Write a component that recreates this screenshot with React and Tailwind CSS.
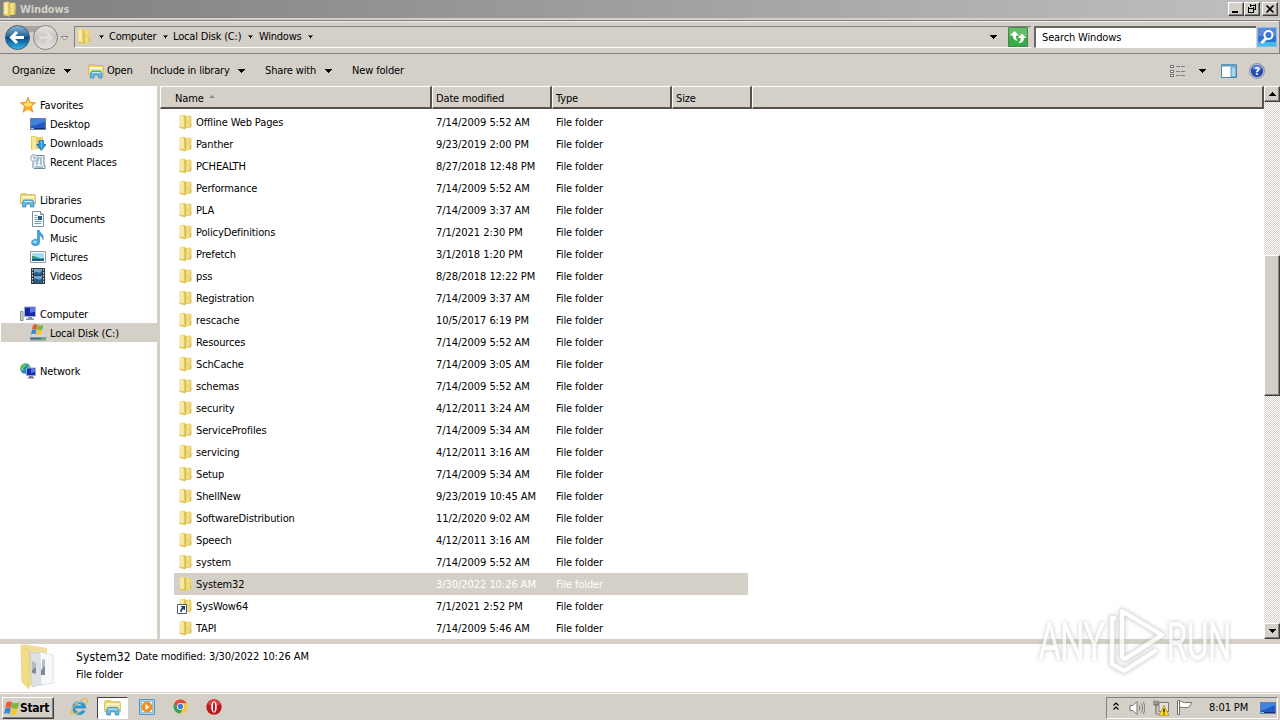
import React from 'react'

const folders = [
    ['Offline Web Pages', '7/14/2009 5:52 AM'],
    ['Panther', '9/23/2019 2:00 PM'],
    ['PCHEALTH', '8/27/2018 12:48 PM'],
    ['Performance', '7/14/2009 5:52 AM'],
    ['PLA', '7/14/2009 3:37 AM'],
    ['PolicyDefinitions', '7/1/2021 2:30 PM'],
    ['Prefetch', '3/1/2018 1:20 PM'],
    ['pss', '8/28/2018 12:22 PM'],
    ['Registration', '7/14/2009 3:37 AM'],
    ['rescache', '10/5/2017 6:19 PM'],
    ['Resources', '7/14/2009 5:52 AM'],
    ['SchCache', '7/14/2009 3:05 AM'],
    ['schemas', '7/14/2009 5:52 AM'],
    ['security', '4/12/2011 3:24 AM'],
    ['ServiceProfiles', '7/14/2009 5:34 AM'],
    ['servicing', '4/12/2011 3:16 AM'],
    ['Setup', '7/14/2009 5:34 AM'],
    ['ShellNew', '9/23/2019 10:45 AM'],
    ['SoftwareDistribution', '11/2/2020 9:02 AM'],
    ['Speech', '4/12/2011 3:16 AM'],
    ['system', '7/14/2009 5:52 AM'],
    ['System32', '3/30/2022 10:26 AM'],
    ['SysWow64', '7/1/2021 2:52 PM'],
    ['TAPI', '7/14/2009 5:46 AM'],
]

function Folder({ className = 'size-4', shortcut = false }) {
    return (
        <svg viewBox="0 0 16 16" className={`shrink-0 ${className}`}>
            <path d="M2.500 1.500L6.500.5l2.500 1v13l-1.500 1-5-1.500z" fill="#f0dd86" />
            <path d="M3.500 2H6.500v11.500h-3z" fill="#f8ebae" />
            <path d="M2.500 12.500L8 13.500v1.500L2.500 13.800z" fill="#dfc462" />
            <path d="M8.500 2l4.500-.5 1.500 1V13L13 14H8.500z" fill="#e9d272" />
            <path d="M7 1l2 1.500v12L7.500 15.300z" fill="#dcc04e" />
            <path d="M10 2.500l2-.3v4l-2 1z" fill="#f3e38f" />
            <path d="M10 8.500l2.500-1v5L10 13z" fill="#f1df86" />
            <path d="M13 9l1 .5v3l-1 .5z" fill="#c9b36a" />
            {shortcut && (
                <>
                    <path d="M.5 6.500h9v9h-9z" fill="#fff" stroke="#555b66" />
                    <path d="M3.500 8h4.500v4.500L6.700 11.300c-1.500.3-1.900 1.200-1.600 2.700l-1.600 0c-.5-2 .2-3.500 1.600-4.300z" fill="#163f86" />
                </>
            )}
        </svg>
    )
}

function Libraries({ className = 'size-4' }) {
    return (
        <svg viewBox="0 0 16 16" className={`shrink-0 ${className}`}>
            <path d="M.5 3l1-1.500h4.500l1 1h8L15.500 4v8H.5z" fill="#e9cf67" stroke="#c9ab4c" strokeWidth=".6" />
            <path d="M1.500 4h13v2h-13z" fill="#fff9d5" />
            <path d="M1 6h14v6H1z" fill="#f5e28d" />
            <path d="M2.500 15v-5L4 8h8.500l1.500 2v5h-3.500v-3H6v3z" fill="#65b9e5" stroke="#2f83ba" strokeWidth=".7" />
            <path d="M4 9.500h8.500" stroke="#c8eefc" />
        </svg>
    )
}

function Star() {
    return (
        <svg viewBox="0 0 16 16" className="size-4 shrink-0">
            <path d="M8 .3l2.200 5 5.400.5-4.200 3.500 1.600 5.900-5-3.300-5 3.300 1.600-5.900L.4 5.800l5.400-.5z" fill="#ffab24" stroke="#e08422" strokeWidth=".7" />
            <path d="M8 2.500L9.400 6.300l3.600.4L10 9l-2 1-3-1.500L3 6.700l3.500-.4z" fill="#ffe274" />
        </svg>
    )
}

function Desktop({ className = 'size-4' }) {
    return (
        <svg viewBox="0 0 16 16" className={`shrink-0 ${className}`}>
            <path d="M0 2h16v12H0z" fill="#6b7fa5" />
            <path d="M1 3h14v9H1z" fill="#2459c5" />
            <path d="M1 3h14v3C10 6 7 10 1 10z" fill="#3f82df" />
            <path d="M1 12h14v1H1z" fill="#182e69" />
            <path d="M1 12h3v1H1z" fill="#8ac9f7" />
        </svg>
    )
}

function Downloads() {
    return (
        <svg viewBox="0 0 16 16" className="size-4 shrink-0">
            <path d="M1 1h5l1 1h6v12H6l-5 1z" fill="#eacd60" />
            <path d="M2 2h4v12H2z" fill="#fae99b" />
            <path d="M9 5.500h4.500V9.500H16l-4.700 6-4.800-6H9z" fill="#2994df" stroke="#166aac" strokeWidth=".7" />
            <path d="M10 6.500h1.500v6" fill="none" stroke="#75c5f5" />
        </svg>
    )
}

function Recent() {
    return (
        <svg viewBox="0 0 16 16" className="size-4 shrink-0">
            <path d="M5 1.500h9v10h1v3H4l-1-1V8" fill="#edf4f8" stroke="#6e8797" />
            <path d="M7 4h5M7 6h2m1 0h2M6 8h2m2 0h2M6 10h2m2 0h2M5 13h8" stroke="#668fa8" />
            <circle cx="4" cy="4" r="3.400" fill="#eef7fd" stroke="#91a6b2" />
            <path d="M4 2v2.500h1.500" fill="none" stroke="#55758a" strokeWidth=".8" />
        </svg>
    )
}

function Documents() {
    return (
        <svg viewBox="0 0 16 16" className="size-4 shrink-0">
            <path d="M2.500.5h8l3 3v12h-11z" fill="#fff" stroke="#7894a6" />
            <path d="M10.500.5v3h3" fill="#cce1ed" stroke="#7894a6" />
            <path d="M4.500 4.500h3m-3 2h3m-3 2h3m-3 2h7m-7 2h7" stroke="#6c9cbc" />
            <path d="M8 5h4v4H8z" fill="#285d8a" />
        </svg>
    )
}

function Music() {
    return (
        <svg viewBox="0 0 16 16" className="size-4 shrink-0">
            <path d="M7.500 0h1.800c.2 3.500 5.200 4 3.700 9.500-.4-2.300-1.500-3.300-3.400-4v7C9.600 16.500 1.500 17 1.500 12.500 1.500 9.500 5 8.500 7.500 9.500z" fill="#3da4df" stroke="#2077b3" strokeWidth=".5" />
            <ellipse cx="5" cy="12" rx="2.200" ry="1.500" fill="#94ddfc" />
        </svg>
    )
}

function Pictures() {
    return (
        <svg viewBox="0 0 16 16" className="size-4 shrink-0">
            <path d="M.5 2.500h15v11H.5z" fill="#fff" stroke="#8a9ba5" />
            <path d="M2 4h12v8H2z" fill="#a3dcf5" />
            <path d="M2 7c3-.5 6 3 12 2v3H2z" fill="#2f9a83" />
            <path d="M2 10c5 0 8 .3 12 0v2H2z" fill="#1d5a87" />
        </svg>
    )
}

function Videos() {
    return (
        <svg viewBox="0 0 16 16" className="size-4 shrink-0">
            <path d="M1 0h14v16H1z" fill="#313941" />
            <path d="M4 1h8v6H4zm0 7h8v7H4z" fill="#6aa7d6" />
            <path d="M4 5c3-3 5 2 8-2v4H4zm0 6c3-2 5 3 8-1v5H4z" fill="#2c5b90" />
            <path d="M2.500 1v14M13.500 1v14" stroke="#dde4e8" strokeDasharray="1.500 1.500" />
        </svg>
    )
}

function Computer() {
    return (
        <svg viewBox="0 0 16 16" className="size-4 shrink-0">
            <path d="M.5 5.500h2.500v9H.5z" fill="#cad4cf" stroke="#83928f" />
            <path d="M4 .5h12v10.500H4z" fill="#a3b2ca" />
            <path d="M5 1.500h10v8.500H5z" fill="#1729a6" />
            <path d="M10 1.500h5v4L10 7z" fill="#5a78e9" />
            <path d="M8 11h4v1.500h2V14H6v-1.500h2z" fill="#8594a6" />
        </svg>
    )
}

function Flag({ className }) {
    return (
        <svg viewBox="0 0 16 16" className={`shrink-0 ${className}`}>
            <path d="M2.500 2.500c2-1.400 3.700-1.100 5.500-.2L6.900 8c-1.700-1-3.600-1-5.600.1z" fill="#ee5729" />
            <path d="M8.400 2.500c2 1 4.300.9 7-.5L14 7.900c-2 1.300-4.500 1.200-6.700.2z" fill="#76b940" />
            <path d="M1.200 8.500c2-1.200 3.800-1 5.600-.1l-1.300 5.500c-1.800-1-3.600-.9-5.400.2z" fill="#3687d9" />
            <path d="M7.200 8.600c2 1 4.500 1 6.700-.2l-1.300 5.500c-2.100 1.300-4.700 1.200-6.700.1z" fill="#fac62f" />
        </svg>
    )
}

function Disk() {
    return (
        <span className="relative size-4 shrink-0">
            <svg viewBox="0 0 16 16" className="size-4">
                <path d="M2 9h12l2 3v3.500H0V12z" fill="#7f969f" />
                <path d="M2 8.500h12l2 3.500H0z" fill="#cddadd" />
                <path d="M1 13.700h10" stroke="#3a6270" />
                <path d="M12 13h3v1.300h-3z" fill="#5ccc38" />
            </svg>
            <Flag className="absolute -top-0.5 left-px size-[13px]" />
        </span>
    )
}

function Network() {
    return (
        <svg viewBox="0 0 16 16" className="size-4 shrink-0">
            <circle cx="5.500" cy="5.500" r="5.300" fill="#2788bd" />
            <path d="M2 2c3-3 6-1 4 1L4 4 3 8C0 7 0 4 2 2zm6-1c3 2 3 5 2 7L8 5z" fill="#67c65a" />
            <path d="M6.500 5h9v7.500h-9z" fill="#1a2db0" stroke="#97a9c5" />
            <path d="M11 5.500h4v3.500l-4 1z" fill="#567be6" />
            <path d="M9 13h4v1h1v1.500H8V14h1z" fill="#6e8097" />
        </svg>
    )
}

function Arrow({ className = '' }) {
    return (
        <svg viewBox="0 0 7 4" className={`h-1 w-[7px] shrink-0 ${className}`} shapeRendering="crispEdges">
            <path d="M0 0h7L3.500 4z" fill="currentColor" />
        </svg>
    )
}

const places = [
    { label: 'Favorites', icon: <Star /> },
    { label: 'Desktop', icon: <Desktop />, child: true },
    { label: 'Downloads', icon: <Downloads />, child: true },
    { label: 'Recent Places', icon: <Recent />, child: true },
    null,
    { label: 'Libraries', icon: <Libraries /> },
    { label: 'Documents', icon: <Documents />, child: true },
    { label: 'Music', icon: <Music />, child: true },
    { label: 'Pictures', icon: <Pictures />, child: true },
    { label: 'Videos', icon: <Videos />, child: true },
    null,
    { label: 'Computer', icon: <Computer /> },
    { label: 'Local Disk (C:)', icon: <Disk />, child: true, selected: true },
    null,
    { label: 'Network', icon: <Network /> },
]

function CaptionButton({ children }) {
    return (
        <div className="h-3.5 w-4 border border-t-white border-r-[#404040] border-b-[#404040] border-l-white bg-[#d4d0c8] shadow-[inset_-1px_-1px_#808080]">
            <svg viewBox="0 0 14 12" className="h-3 w-3.5" shapeRendering="crispEdges" fill="none" stroke="#000">
                {children}
            </svg>
        </div>
    )
}

function TitleBar() {
    return (
        <div className="flex h-[18px] items-center bg-linear-to-r from-[#808080] to-[#c0c0c0] pl-px">
            <Folder />
            <span className="ml-[3px] pt-0.5 text-[11px] font-bold tracking-[-0.15px] text-[#d4d0c8]">Windows</span>
            <div className="mr-0.5 ml-auto flex">
                <CaptionButton><path d="M3 9h6" strokeWidth="2" /></CaptionButton>
                <CaptionButton><path d="M5 2h6M5.500 1v3M10.500 1v6M8 6.500h3M3 5h6M3.500 4v6M8.500 4v6M3 9.500h6" /></CaptionButton>
                <div className="w-0.5" />
                <CaptionButton><path d="M3.500 2.500l7 7m0-7l-7 7" strokeWidth="1.600" shapeRendering="auto" /></CaptionButton>
            </div>
        </div>
    )
}

function NavButtons() {
    return (
        <svg viewBox="0 0 70 32" className="h-8 w-[70px] shrink-0">
            <defs>
                <linearGradient id="back" x1="0" y1="0" x2="0" y2="1">
                    <stop offset="0" stopColor="#8bb7d5" />
                    <stop offset=".45" stopColor="#27679f" />
                    <stop offset=".5" stopColor="#0a4689" />
                    <stop offset="1" stopColor="#2ebdf0" />
                </linearGradient>
                <linearGradient id="forward" x1="0" y1="0" x2="0" y2="1">
                    <stop offset="0" stopColor="#e4e3e1" />
                    <stop offset=".5" stopColor="#c6c5c2" />
                    <stop offset="1" stopColor="#e7e6e3" />
                </linearGradient>
            </defs>
            <path d="M17 5h28v4c-8 3-20 3-28 0z" fill="#aaa69f" />
            <circle cx="17.500" cy="16.500" r="12" fill="url(#back)" stroke="#466178" />
            <path d="M17 11l-5.500 5.500L17 22M12.500 16.500H24" fill="none" stroke="#fff" strokeWidth="3" />
            <circle cx="45.500" cy="16.500" r="12" fill="url(#forward)" stroke="#858482" />
            <path d="M46 11l5.500 5.500L46 22M50.500 16.500H39" fill="none" stroke="#dddcd9" strokeWidth="3" />
            <path d="M61 15.500h7L64.500 19z" fill="#f5f4f2" stroke="#85827d" />
        </svg>
    )
}

function AddressBar() {
    return (
        <div className="mt-0.5 flex h-[34px] items-center border-t border-r border-b border-[#808080] bg-[#d4d0c8] shadow-[0_1px_#fff,inset_0_1px_#eeece8]">
            <NavButtons />
            <div className="ml-1 flex h-[22px] w-[957px] items-center border-t border-l border-[#808080] border-b border-b-white pb-px">
                <Folder className="size-[17px]" />
                <Arrow className="ml-1.5 scale-80" />
                <span className="ml-1 w-[47px]">Computer</span>
                <Arrow className="ml-1.5 scale-80" />
                <span className="ml-1 w-[69px] tracking-[-0.18px]">Local Disk (C:)</span>
                <Arrow className="ml-[5px] scale-80" />
                <span className="ml-[5px] w-[43px]">Windows</span>
                <Arrow className="ml-[5px] scale-80" />
                <Arrow className="mr-[34px] ml-auto" />
            </div>
            <div className="-ml-[23px] flex h-[22px] w-[22px] items-center">
                <svg viewBox="0 0 20 20" className="size-5">
                    <path d="M.5.5h19v19H.5z" fill="#37ac49" stroke="#4d8253" />
                    <path d="M1 1h18v8H1z" fill="#63bd6b" />
                    <path d="M6.500 4L2 8.500h2.800c0 4 2.200 5.500 5.200 5-1.800-1.200-2.200-3-2-5H11zM14 6.500L9.500 11h3c.2 2-.5 4-2.500 5 3.500.5 6-1.500 6-5h2.500z" fill="#fff" />
                </svg>
            </div>
            <div className="ml-1 flex h-[22px] w-[222px] items-center border-t-2 border-l-2 border-[#686868] border-b border-b-white bg-white pl-1.5">
                <span className="tracking-[-0.15px]">Search Windows</span>
            </div>
            <svg viewBox="0 0 20 20" className="ml-px size-5 shrink-0">
                <path d="M.5.5h19v19H.5z" fill="#2d72d2" stroke="#8eb8e8" />
                <path d="M1 1h18v8H1z" fill="#5c88dc" />
                <path d="M1 15h18v4H1z" fill="#46b8e9" />
                <path d="M9.500 11l-5 5" stroke="#fff" strokeWidth="3" />
                <circle cx="11.500" cy="8" r="4" fill="#3577d1" stroke="#fff" strokeWidth="2" />
            </svg>
        </div>
    )
}

function Toolbar() {
    return (
        <div className="flex h-8 items-center bg-[#d4d0c8] pt-px pl-3">
            <span className="w-[45px] tracking-[-0.15px]">Organize</span>
            <Arrow className="ml-[7px]" />
            <Libraries className="ml-[17px] size-4" />
            <span className="ml-[3px] w-[27px]">Open</span>
            <span className="ml-4 w-[81px] tracking-[-0.2px]">Include in library</span>
            <Arrow className="ml-[7px]" />
            <span className="ml-5 w-[53px] tracking-[-0.15px]">Share with</span>
            <Arrow className="ml-[7px]" />
            <span className="ml-5 tracking-[-0.15px]">New folder</span>
            <div className="mr-[15px] ml-auto flex items-center">
                <svg viewBox="0 0 16 14" className="h-3.5 w-4" shapeRendering="crispEdges">
                    <path d="M.5 1.500h3v2h-3zm0 4.500h3v2h-3zm0 4.500h3v2h-3z" fill="#fff" stroke="#75716d" />
                    <path d="M6 2.500h4m1 0h4M6 7h4m1 0h4m-9 4.500h4m1 0h4" stroke="#77808a" />
                </svg>
                <Arrow className="ml-[13px]" />
                <svg viewBox="0 0 16 14" className="ml-[15px] h-3.5 w-4">
                    <path d="M.5.5h15v13H.5z" fill="#fff" stroke="#4b83a4" />
                    <path d="M0 0h16v2.500H0z" fill="#5b9abd" />
                    <path d="M10 3h5v10h-5z" fill="#a2d8f1" stroke="#4b83a4" strokeWidth=".8" />
                </svg>
                <svg viewBox="0 0 16 16" className="ml-3 size-4">
                    <circle cx="8" cy="8" r="7.500" fill="#c9cfdb" stroke="#8791a4" />
                    <circle cx="8" cy="8" r="6.200" fill="#264bb0" />
                    <path d="M3 6c1-5 9-5 10 0-3 1-7 1-10 0z" fill="#658bdc" />
                    <text x="8" y="12" textAnchor="middle" fill="#fff" className="text-[11px] font-bold">?</text>
                </svg>
            </div>
        </div>
    )
}

function Sidebar() {
    return (
        <div className="w-[157px] shrink-0 bg-white pt-[9px]">
            {places.map((place, index) => (
                <div
                    key={index}
                    className={`ml-px flex h-[19px] items-center ${place?.selected ? 'bg-[#d4d0c8]' : ''} ${place?.child ? 'pl-[29px]' : 'pl-[19px]'}`}
                >
                    {place?.icon}
                    {place && <span className="ml-1 pt-0.5 tracking-[-0.15px]">{place.label}</span>}
                </div>
            ))}
        </div>
    )
}

function HeaderCell({ className, children }) {
    return (
        <div className={`flex h-[23px] items-center border-t border-r-2 border-b-2 border-l border-t-white border-r-[#56534e] border-b-[#56534e] border-l-white bg-[#d4d0c8] pt-[3px] tracking-[-0.15px] ${className}`}>
            {children}
        </div>
    )
}

function FileList() {
    return (
        <div className="min-w-0 flex-1 bg-white">
            <div className="flex">
                <HeaderCell className="w-[272px] pl-3.5">
                    Name
                    <svg viewBox="0 0 6 3" className="mb-1 ml-[5px] h-[3px] w-1.5"><path d="M0 3h6L3 0z" fill="#918d86" /></svg>
                </HeaderCell>
                <HeaderCell className="w-[120px] pl-[3px]">Date modified</HeaderCell>
                <HeaderCell className="w-[120px] pl-[3px]">Type</HeaderCell>
                <HeaderCell className="w-20 pl-[3px]">Size</HeaderCell>
                <HeaderCell className="flex-1" />
            </div>
            <div className="mt-0.5 ml-3.5 w-[574px]">
                {folders.map(([name, date]) => (
                    <div key={name} className={`flex h-[22px] items-center pl-[3px] ${name === 'System32' ? 'bg-[#d4d0c8]' : ''}`}>
                        <Folder shortcut={name === 'SysWow64'} className="mb-px size-4" />
                        <span className="ml-[3px] w-60 pt-0.5 tracking-[-0.13px]">{name}</span>
                        <span className={`w-[120px] pt-0.5 tracking-[-0.05px] ${name === 'System32' ? 'text-white' : ''}`}>{date}</span>
                        <span className={`pt-0.5 tracking-[-0.12px] ${name === 'System32' ? 'text-white' : ''}`}>File folder</span>
                    </div>
                ))}
            </div>
        </div>
    )
}

function ScrollButton({ up = false }) {
    return (
        <div className="flex h-4 w-4 items-center justify-center border border-t-white border-r-[#404040] border-b-[#404040] border-l-white bg-[#d4d0c8] shadow-[inset_-1px_-1px_#808080]">
            <Arrow className={up ? 'rotate-180' : ''} />
        </div>
    )
}

function ScrollBar() {
    return (
        <div className="flex w-4 flex-col bg-[repeating-conic-gradient(#d4d0c8_0_25%,#fff_0_50%)] bg-[length:2px_2px]">
            <ScrollButton up />
            <div className="mt-[153px] h-[141px] border border-t-white border-r-[#404040] border-b-[#404040] border-l-white bg-[#d4d0c8] shadow-[inset_-1px_-1px_#808080]" />
            <div className="flex-1" />
            <ScrollButton />
        </div>
    )
}

function DetailsPane() {
    return (
        <div className="flex h-12 bg-white pl-5">
            <svg viewBox="0 0 36 46" className="h-[46px] w-9 shrink-0">
                <path d="M3 0l24 4v30L8 43z" fill="#f0de9c" />
                <path d="M10 8l15 2v30l-13 3z" fill="#dce2e5" stroke="#bdc3c7" strokeWidth=".5" />
                <path d="M20 8l13 3v28l-12 2z" fill="#f8f9fa" stroke="#cdd1d4" strokeWidth=".6" />
                <path d="M12 17l4 2v12l-4-2zm10-1l3-1v16l-3-2z" fill="#b4bdc4" />
                <path d="M12 26l4-3v6h-4zm9 0l4-4v9h-4z" fill="#7c8b9a" />
                <path d="M1 1l8 6v38l-7-7z" fill="#f2dd89" stroke="#e1c872" strokeWidth=".7" />
            </svg>
            <div className="ml-5 pt-1">
                <div className="flex h-[18px] items-center">
                    <span className="w-[59px] text-[12px] tracking-[0.1px]">System32</span>
                    <span className="w-[74px] tracking-[-0.2px]">Date modified:</span>
                    <span className="tracking-[-0.05px]">3/30/2022 10:26 AM</span>
                </div>
                <div className="flex h-[18px] items-center tracking-[-0.12px]">File folder</div>
            </div>
        </div>
    )
}

function Taskbar() {
    return (
        <div className="flex h-7 items-center border-t border-[#d4d0c8] bg-[#d4d0c8] shadow-[inset_0_1px_#fff]">
            <div className="mt-0.5 ml-0.5 flex h-[22px] w-[52px] items-center border border-t-white border-r-[#404040] border-b-[#404040] border-l-white shadow-[inset_-1px_-1px_#808080]">
                <Flag className="ml-px size-4" />
                <span className="text-[12px] font-bold tracking-[-0.35px]">Start</span>
            </div>
            <svg viewBox="0 0 18 18" className="ml-4 size-[18px]">
                <path d="M14 12.500A5.500 5.500 0 1 1 14.500 9H5" fill="none" stroke="#2998db" strokeWidth="3" />
                <path d="M1.500 15.500C-1 11 14-3 17 1.500c1 1.800-1 4-2 5M2 13c0 5 6 2 7 1" fill="none" stroke="#e3bd50" strokeWidth="1.200" />
                <path d="M5 6c2-2.500 5-2.500 7-1" fill="none" stroke="#a6e2fa" />
            </svg>
            <div className="mt-0.5 ml-[9px] flex h-[22px] w-[31px] items-center justify-center border border-t-[#404040] border-r-white border-b-white border-l-[#404040] bg-white">
                <Libraries className="size-[17px]" />
            </div>
            <svg viewBox="0 0 16 16" className="ml-[11px] size-4">
                <path d="M.5.5h15v15H.5z" fill="#a4d6f4" stroke="#5595be" />
                <path d="M2.500 2.500h11v11h-11z" fill="#fff" stroke="#568dab" strokeWidth=".5" />
                <circle cx="8" cy="8" r="5.400" fill="#f28d20" />
                <path d="M6.500 5v6l4-3z" fill="#fff" />
            </svg>
            <svg viewBox="0 0 16 16" className="ml-[18px] size-[15px]">
                <circle cx="8" cy="8" r="7.500" fill="#f7ca2d" />
                <path d="M1.500 4.200A7.500 7.500 0 0 1 14.600 4.500H8L5 10z" fill="#df4a3c" />
                <path d="M1.500 4.200A7.500 7.500 0 0 0 7.500 15.500L11 10H5z" fill="#36a15a" />
                <circle cx="8" cy="8" r="3.700" fill="#fff" />
                <circle cx="8" cy="8" r="2.900" fill="#3d7fdb" />
            </svg>
            <svg viewBox="0 0 16 16" className="ml-[18px] size-4">
                <circle cx="8" cy="8" r="7.700" fill="#bd1820" />
                <path d="M1.500 5C4-1 12-1 14.500 5 11 7 5 7 1.500 5z" fill="#d24a48" />
                <ellipse cx="8" cy="8" rx="2.800" ry="5.800" fill="#fff" />
                <ellipse cx="8" cy="8" rx="1.100" ry="4.800" fill="#b41920" />
            </svg>
            <div className="mt-0.5 mr-0.5 ml-auto flex h-[22px] w-[172px] items-center border-t border-l border-[#808080] border-r border-b border-r-white border-b-white pl-1.5">
                <svg viewBox="0 0 6 8" className="mb-1 h-2 w-1.5" fill="none" stroke="#000" strokeWidth="1.200"><path d="M.5 3.500L3 1l2.500 2.500m-5 4L3 5l2.500 2.500" /></svg>
                <svg viewBox="0 0 16 16" className="ml-2.5 size-4" fill="none" stroke="#77746f">
                    <path d="M1 5.500h3l4-4v13l-4-4H1z" fill="#fff" />
                    <path d="M10 5.500c1 1.500 1 3.500 0 5M12 3.500c2 2.500 2 6.500 0 9M14 2c2.500 3 2.500 9 0 12" />
                </svg>
                <svg viewBox="0 0 16 16" className="ml-2 size-4">
                    <path d="M6 2.500h9.500v9H6zM4 14h6" fill="#e3e4e1" stroke="#7b7974" />
                    <path d="M1 .5v4.500h4V.5M3 .5v14" fill="none" stroke="#605e5a" />
                    <path d="M11 5l5 10.500H6z" fill="#fbd728" stroke="#a18418" strokeWidth=".6" />
                    <path d="M11 8.500v4m0 1v1" stroke="#000" strokeWidth="1.200" />
                </svg>
                <svg viewBox="0 0 16 16" className="ml-[7px] size-4" fill="#fff" stroke="#706e69">
                    <path d="M1.500.5h2v14h-2zM3.500 1.500c3-1 4 2 6 1h6c-1 3-2 5-5 5-2 1-4-1-7 0z" />
                </svg>
                <span className="ml-[17px] w-[41px] tracking-[-0.1px] whitespace-nowrap">8:01 PM</span>
                <Desktop className="mr-px ml-auto size-4" />
            </div>
        </div>
    )
}

function Watermark() {
    return (
        <svg viewBox="0 0 210 74" className="pointer-events-none absolute top-[603px] left-[1032px] h-[74px] w-[210px] overflow-visible opacity-75 drop-shadow-[0_0_2px_#b0b0b0]">
            <g fill="#fff" stroke="#fff" strokeWidth="1.800" className="font-['Roboto'] text-[50px] font-light tracking-normal">
                <text transform="translate(7 56) scale(.68 1)">ANY</text>
                <text transform="translate(135 56) scale(.64 1)">RUN</text>
            </g>
            <g fill="none" stroke="#dcdbda" strokeWidth="5.500" strokeLinejoin="round">
                <path d="M84 15h-4v46l12 7 33-21M90 8l40 24-37 24-3-2z" />
            </g>
            <g fill="none" stroke="#fff" strokeWidth="4" strokeLinejoin="round">
                <path d="M84 15h-4v46l12 7 33-21M90 8l40 24-37 24-3-2z" />
            </g>
        </svg>
    )
}

export default function App() {
    return (
        <div className="relative flex h-[720px] w-[1280px] flex-col overflow-hidden bg-[#d4d0c8] font-['DejaVu_Sans_Condensed','DejaVu_Sans',sans-serif] text-[11px] leading-[14px] tracking-[-0.25px] whitespace-nowrap text-black">
            <TitleBar />
            <AddressBar />
            <Toolbar />
            <div className="flex h-[553px]">
                <Sidebar />
                <div className="w-[3px] bg-[#d4d0c8]" />
                <FileList />
                <ScrollBar />
            </div>
            <div className="h-[5px] bg-[#d4d0c8]" />
            <DetailsPane />
            <Taskbar />
            <Watermark />
        </div>
    )
}
